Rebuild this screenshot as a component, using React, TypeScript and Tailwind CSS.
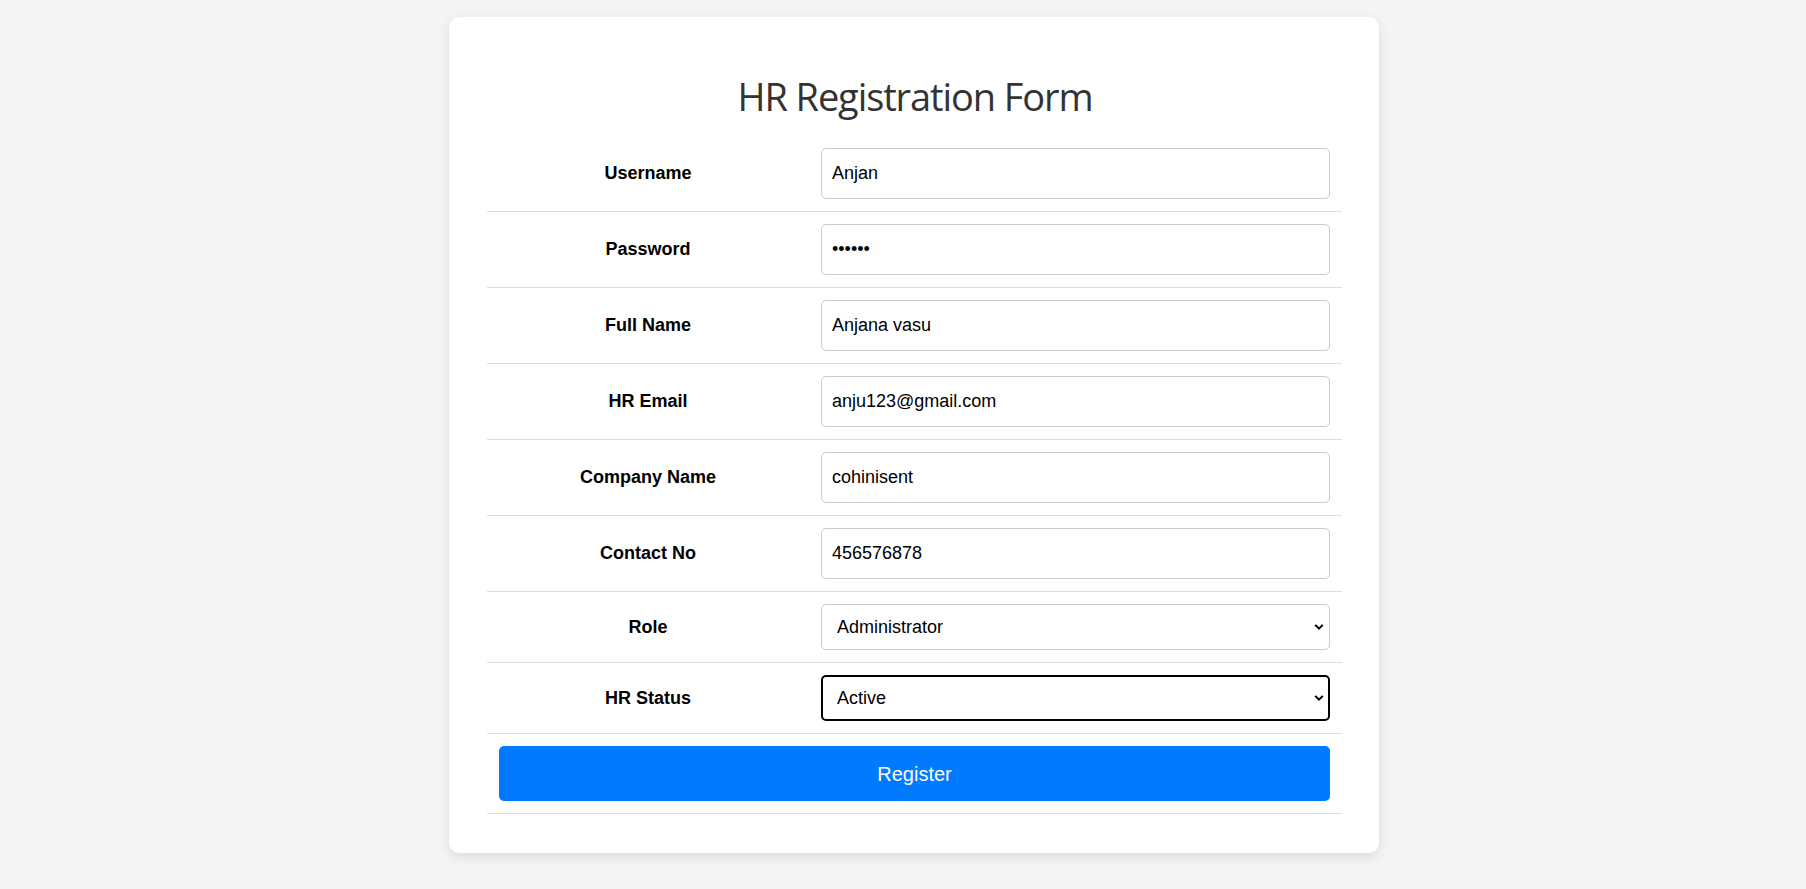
import React from "react";

const rows: { label: string; value: string; type?: string }[] = [
  { label: "Username", value: "Anjan" },
  { label: "Password", value: "123456", type: "password" },
  { label: "Full Name", value: "Anjana vasu" },
  { label: "HR Email", value: "anju123@gmail.com" },
  { label: "Company Name", value: "cohinisent" },
  { label: "Contact No", value: "456576878" },
];

function Chevron() {
  return (
    <svg
      className="pointer-events-none absolute right-[6px] top-1/2 -translate-y-1/2"
      width="10"
      height="7"
      viewBox="0 0 10 7"
    >
      <path d="M1.2 1.4 L5 5.2 L8.8 1.4" fill="none" stroke="#000" strokeWidth="2" />
    </svg>
  );
}

export default function App() {
  return (
    <div
      className="min-h-screen bg-[#f4f4f4] flex justify-center pl-[22px] pt-[17px]"
      style={{ fontFamily: '"Liberation Sans", Arial, sans-serif' }}
    >
      <div className="w-[930px] h-[836px] bg-white rounded-[10px] shadow-[0_4px_12px_rgba(0,0,0,0.1)] pl-[38px] pr-[36px] pt-[55px] pb-[38px]">
        <h2 className="text-center text-[38px] leading-[48px] text-[#333] mb-[16px] font-['Open_Sans',sans-serif] tracking-[-1.1px]">
          HR Registration Form
        </h2>
        <div className="w-[855px]">
          {rows.map((r) => (
            <div key={r.label} className="flex items-center border-b border-[#dddddd]">
              <div className="w-[322px] px-3 text-center font-bold text-[18px] text-black">{r.label}</div>
              <div className="flex-1 p-3">
                <input
                  type={r.type ?? "text"}
                  defaultValue={r.value}
                  className="w-full h-[51px] border border-[#cccccc] rounded-[5px] px-[10px] text-[18px] text-black outline-none"
                />
              </div>
            </div>
          ))}
          <div className="flex items-center border-b border-[#dddddd]">
            <div className="w-[322px] px-3 text-center font-bold text-[18px] text-black">Role</div>
            <div className="flex-1 p-3">
              <div className="relative">
                <select
                  defaultValue="Administrator"
                  className="appearance-none w-full h-[46px] border border-[#cccccc] rounded-[5px] pl-[15px] text-[18px] text-black bg-white outline-none"
                >
                  <option>Administrator</option>
                  <option>Manager</option>
                </select>
                <Chevron />
              </div>
            </div>
          </div>
          <div className="flex items-center border-b border-[#dddddd]">
            <div className="w-[322px] px-3 text-center font-bold text-[18px] text-black">HR Status</div>
            <div className="flex-1 p-3">
              <div className="relative">
                <select
                  defaultValue="Active"
                  className="appearance-none w-full h-[46px] border-2 border-black rounded-[5px] pl-[14px] text-[18px] text-black bg-white outline-none"
                >
                  <option>Active</option>
                  <option>Inactive</option>
                </select>
                <Chevron />
              </div>
            </div>
          </div>
          <div className="border-b border-[#dddddd] p-3">
            <button className="w-full h-[55px] bg-[#007bff] rounded-[5px] text-white text-[20px]">
              Register
            </button>
          </div>
        </div>
      </div>
    </div>
  );
}
